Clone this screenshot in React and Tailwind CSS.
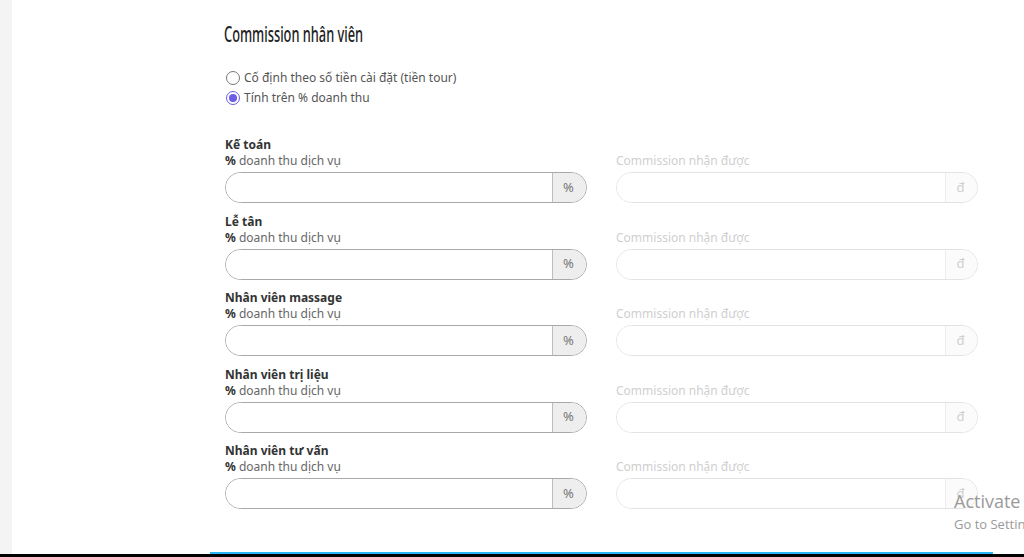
import React from "react";

const rows = ["Kế toán", "Lễ tân", "Nhân viên massage", "Nhân viên trị liệu", "Nhân viên tư vấn"];

function Radio({ checked, label }) {
  return (
    <label className="flex items-center h-[20px] gap-[4px]">
      <span
        className={
          "w-[14px] h-[14px] rounded-full border flex items-center justify-center bg-white " +
          (checked ? "border-[#6c5ce7]" : "border-[#777]")
        }
      >
        {checked && <span className="w-[8px] h-[8px] rounded-full bg-[#6c5ce7]" />}
      </span>
      <span className="text-[12px] text-[#555]">{label}</span>
    </label>
  );
}

function Field({ label }) {
  return (
    <div className="flex flex-col">
      <div className="text-[12px] leading-[17px] font-bold text-[#333]">{label}</div>
      <div className="grid grid-cols-[362px_362px] gap-x-[29px]">
        <div className="flex flex-col">
          <div className="text-[12px] leading-[16px] text-[#666]">
            <span className="font-bold text-[#333]">%</span> doanh thu dịch vụ
          </div>
          <div className="mt-[3px] h-[31px] rounded-full border border-[#a9a9a9] flex overflow-hidden">
            <div className="flex-1 bg-white" />
            <div className="w-[34px] bg-[#eeeeee] border-l border-[#bdbdbd] flex items-center justify-center text-[13px] text-[#777] pr-[2px]">
              %
            </div>
          </div>
        </div>
        <div className="flex flex-col">
          <div className="text-[12px] leading-[16px] text-[#cfcfcf]">Commission nhận được</div>
          <div className="mt-[3px] h-[31px] rounded-full border border-[#e3e3e3] flex overflow-hidden">
            <div className="flex-1 bg-white" />
            <div className="w-[32px] bg-[#fbfbfb] border-l border-[#ececec] flex items-center justify-center text-[13px] text-[#d0d0d0] pr-[2px]">
              đ
            </div>
          </div>
        </div>
      </div>
    </div>
  );
}

export default function App() {
  return (
    <div
      className="relative w-full h-[557px] overflow-hidden bg-white flex flex-col"
      style={{ fontFamily: '"Noto Sans", "Open Sans", sans-serif' }}
    >
      <div className="flex flex-1 min-h-0">
        <div className="w-[12px] bg-[#f4f4f4] shrink-0" />
        <div className="flex-1 flex flex-col pl-[198px]">
          <div className="w-[783px] flex-1 flex flex-col pl-[14px]">
            <h2 className="mt-[22px] h-[24px] leading-[24px]">
              <span
                className="inline-block text-[21px] text-[#222] font-medium scale-x-[0.61] origin-left whitespace-nowrap"
                style={{ fontFamily: '"Noto Sans", "DejaVu Sans", sans-serif' }}
              >
                Commission nhân viên
              </span>
            </h2>
            <div className="mt-[22px] flex flex-col pl-[2px]">
              <Radio label="Cố định theo số tiền cài đặt (tiền tour)" />
              <Radio checked label="Tính trên % doanh thu" />
            </div>
            <div className="mt-[28px] flex flex-col gap-[9.5px] pl-[1px]">
              {rows.map((r) => (
                <Field key={r} label={r} />
              ))}
            </div>
          </div>
          <div className="w-[783px] h-[2px] bg-[#29b6f6]" />
        </div>
      </div>
      <div className="h-[3px] bg-black shrink-0" />
      <div
        className="absolute left-[954px] top-[490px] text-[#9a9a9a] whitespace-nowrap"
        style={{ fontFamily: '"Open Sans", "Noto Sans", sans-serif' }}
      >
        <div className="text-[18px] leading-[22px]">Activate Windows</div>
        <div className="text-[13px] leading-[18px] mt-[3px]">Go to Settings to activate Windows.</div>
      </div>
    </div>
  );
}
